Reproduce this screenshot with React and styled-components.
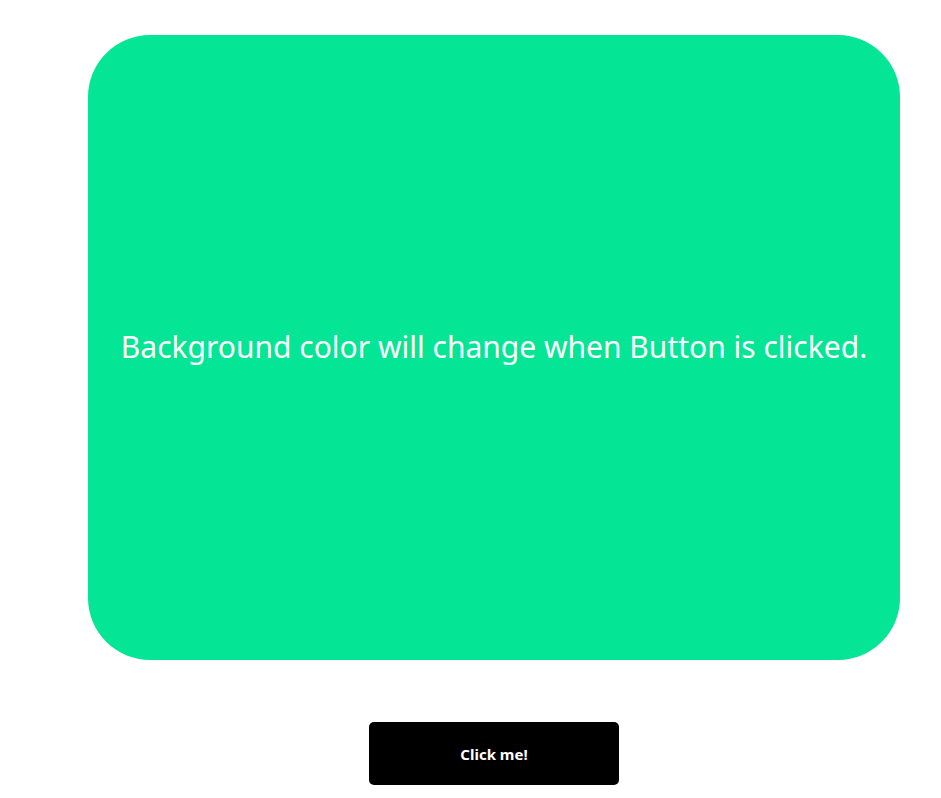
import React, { useState } from "react";
import styled, { createGlobalStyle } from "styled-components";

const GlobalStyle = createGlobalStyle`
	body {
		margin: 0;
		background: #ffffff;
		font-family: "Noto Sans", "DejaVu Sans", sans-serif;
	}
`;

const colors = ["#04e595", "#ff6b6b", "#4d7cfe", "#f7b731"];

const Page = styled.div`
	display: flex;
	flex-direction: column;
	align-items: center;
	gap: 62px;
	width: 812px;
	padding: 35px 0 14px 88px;
`;

const ColorBox = styled.div`
	display: flex;
	align-items: center;
	justify-content: center;
	width: 100%;
	height: 625px;
	border-radius: 62px;
	background-color: ${(props) => props.$bg};
	transition: background-color 0.3s;
`;

const Message = styled.p`
	margin: 0 0 2px;
	color: #ffffff;
	font-size: 30px;
	font-weight: 400;
	text-align: center;
`;

const Button = styled.button`
	width: 250px;
	height: 63px;
	border: none;
	border-radius: 5px;
	background: #000000;
	color: #ffffff;
	font-family: inherit;
	font-size: 15px;
	font-weight: 700;
	cursor: pointer;
`;

const App = () => {
	const [index, setIndex] = useState(0);

	return (
		<>
			<GlobalStyle />
			<Page>
				<ColorBox $bg={colors[index]}>
					<Message>Background color will change when Button is clicked.</Message>
				</ColorBox>
				<Button onClick={() => setIndex((index + 1) % colors.length)}>
					Click me!
				</Button>
			</Page>
		</>
	);
};

export default App;
